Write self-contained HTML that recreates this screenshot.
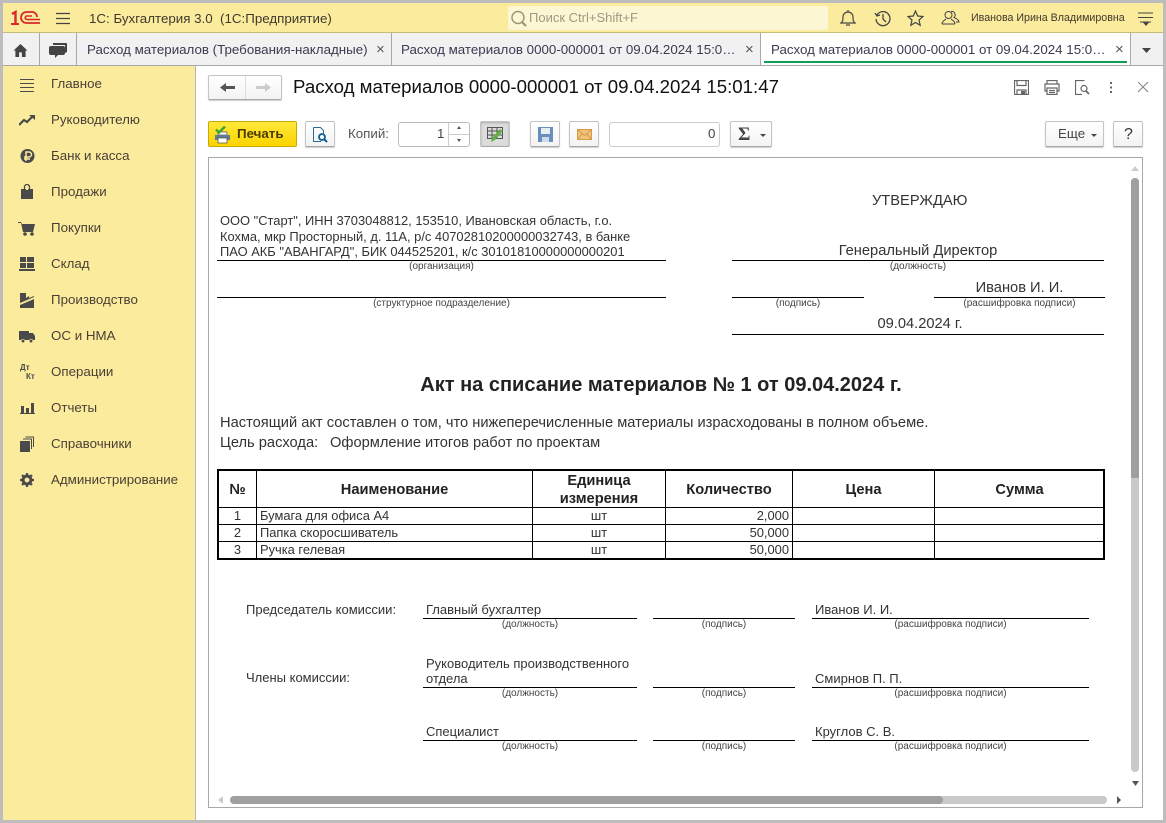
<!DOCTYPE html>
<html lang="ru"><head><meta charset="utf-8"><title>Расход материалов</title>
<style>
html,body{margin:0;padding:0;background:#fff}
body{width:1166px;height:823px;position:relative;overflow:hidden;font-family:"Liberation Sans",Arial,sans-serif;color:#333}
.a{position:absolute}
.t{position:absolute;white-space:nowrap;line-height:16px;height:16px}
.m{font-size:13.33px;color:#4a3f35;left:51px}
.i{position:absolute;left:19px;width:16px;height:16px}
.tab{font-size:13.33px;color:#3b3b50;top:42px}
.x{font-size:15px;color:#555}
.btn{position:absolute;box-sizing:border-box;border:1px solid #c4c4c4;border-bottom-color:#a8a8a8;border-radius:2px;background:linear-gradient(#fff,#f3f3f3);box-shadow:0 1px 1px #ccc}
.d{font-size:14.67px;color:#333}
.s{font-size:10px;color:#444;text-align:center;line-height:10px;height:10px}
.l{position:absolute;background:#000;height:1px}
.sg{font-size:13px;color:#333}
.c{position:absolute;background:#000}
.h{font-size:14.67px;font-weight:bold;color:#222;text-align:center}
.r{font-size:12.9px;color:#333}
</style></head><body>
<!-- frame -->
<div class="a" style="left:0;top:0;width:1166px;height:823px;background:#bdbdbd"></div>
<div class="a" style="left:3px;top:3px;width:1160px;height:817px;background:#fff"></div>
<!-- header -->
<div class="a" style="left:3px;top:3px;width:1160px;height:30px;background:#fbec9d;border-bottom:1px solid #c8bb78;box-sizing:border-box"></div>
<svg class="a" style="left:10px;top:10px" width="32" height="16" viewBox="0 0 32 16"><g fill="none" stroke="#d9272e"><path d="M2 4l3.500-2v12" stroke-width="2.400"/><path d="M1 14h8" stroke-width="2"/><path d="M27 7A5 5 0 0 0 22 2H16.500a5.500 5.500 0 0 0 0 11H30" stroke-width="1.800"/><path d="M22 6H17a1.700 1.700 0 0 0 0 3.500H30" stroke-width="1.600"/></g></svg>
<svg class="a" style="left:56px;top:12px" width="15" height="13"><path d="M0 1.500h14M0 6.500h14M0 11.500h14" stroke="#444" stroke-width="1.200"/></svg>
<div class="t" style="left:89px;top:11px;font-size:13.33px;color:#40382c">1С: Бухгалтерия 3.0&nbsp; (1С:Предприятие)</div>
<div class="a" style="left:508px;top:6px;width:320px;height:24px;background:#fdf6d2;border-radius:2px"></div>
<svg class="a" style="left:510px;top:10px" width="18" height="18" fill="none" stroke="#99937a" stroke-width="1.400"><circle cx="8" cy="7.500" r="6"/><path d="M12 12l4 4" stroke-width="2"/></svg>
<div class="t" style="left:529px;top:10px;font-size:13px;color:#9d9a84">Поиск Ctrl+Shift+F</div>
<svg class="a" style="left:840px;top:10px" width="16" height="17" fill="none" stroke="#444" stroke-width="1.200"><path d="M1 13c2-2 2-3 2-6a5 5 0 0 1 10 0c0 3 0 4 2 6zM8 2V0M6 15h4"/></svg>
<svg class="a" style="left:874px;top:10px" width="18" height="17" fill="none" stroke="#444" stroke-width="1.300"><path d="M3 5a7 7 0 1 1-1 4M1 3l2 3 3-1M9 4v5l3 3"/></svg>
<svg class="a" style="left:907px;top:10px" width="17" height="17" fill="none" stroke="#444" stroke-width="1.200"><path d="M8.500 1l2.200 5 5.300.5-4 3.500 1.200 5.300-4.700-2.800-4.700 2.800 1.200-5.300-4-3.500 5.300-.5z"/></svg>
<svg class="a" style="left:941px;top:9px" width="19" height="17" fill="none" stroke="#444" stroke-width="1"><circle cx="7.500" cy="6" r="3.500"/><path d="M1 15c0-3 3-4 4-5M14 15c0-3-3-4-4-5M1 15h13M10 2.500a3.500 3.500 0 0 1 3 6c2 1 5 2 5 4.500h-3"/></svg>
<div class="t" style="left:971px;top:10px;font-size:10.67px;color:#40382c">Иванова Ирина Владимировна</div>
<svg class="a" style="left:1138px;top:12px" width="16" height="15"><path d="M0 1h15M0 5.500h15M2 10h11" stroke="#444" fill="none"/><path d="M5 10.500h6l-3 3.500z" fill="#444"/></svg>
<!-- tabs -->
<div class="a" style="left:3px;top:33px;width:1160px;height:33px;background:#f1f1f1;border-bottom:1px solid #a8a8a8;box-sizing:border-box"></div>
<div class="a" style="left:39px;top:33px;width:1px;height:32px;background:#a8a8a8"></div>
<div class="a" style="left:76px;top:33px;width:1px;height:32px;background:#a8a8a8"></div>
<div class="a" style="left:391px;top:33px;width:1px;height:32px;background:#a8a8a8"></div>
<div class="a" style="left:760px;top:33px;width:1px;height:32px;background:#a8a8a8"></div>
<div class="a" style="left:761px;top:33px;width:370px;height:32px;background:#fff"></div>
<div class="a" style="left:1130px;top:33px;width:1px;height:32px;background:#a8a8a8"></div>
<div class="a" style="left:764px;top:61px;width:363px;height:2px;background:#0f9d58"></div>
<svg class="a" style="left:13px;top:44px" width="15" height="13" viewBox="0 0 15 14"><path d="M7.500 0L15 7h-2v7H9V9H6v5H2V7H0z" fill="#444"/></svg>
<svg class="a" style="left:49px;top:43px" width="18" height="16"><path d="M4 0h13a1 1 0 0 1 1 1v8l-2 1V2H4z" fill="#444"/><path d="M2 3h12a2 2 0 0 1 2 2v5a2 2 0 0 1-2 2H9l-3 3v-3H2a2 2 0 0 1-2-2V5a2 2 0 0 1 2-2z" fill="#444"/></svg>
<div class="t tab" style="left:87px">Расход материалов (Требования-накладные)</div>
<div class="t x" style="left:376px;top:42px">×</div>
<div class="t tab" style="left:401px">Расход материалов 0000-000001 от 09.04.2024 15:0…</div>
<div class="t x" style="left:745px;top:42px">×</div>
<div class="t tab" style="left:771px">Расход материалов 0000-000001 от 09.04.2024 15:0…</div>
<div class="t x" style="left:1115px;top:42px">×</div>
<svg class="a" style="left:1142px;top:48px" width="9" height="5"><path d="M0 0h9L4.500 5z" fill="#444"/></svg>
<!-- sidebar -->
<div class="a" style="left:3px;top:66px;width:192px;height:754px;background:#fbec9d;border-right:1px solid #b5b5b5"></div>
<svg class="i" style="top:77px"><path d="M1 2.500h14M1 6.500h14M1 10.500h14M1 14.500h14" stroke="#4a4a4a"/></svg>
<div class="t m" style="top:76px">Главное</div>
<svg class="i" style="top:112px"><path d="M0 13l5-5 3 2 5-5" stroke="#4a4a4a" stroke-width="2.200" fill="none"/><path d="M10 3h6v5z" fill="#4a4a4a"/></svg>
<div class="t m" style="top:112px">Руководителю</div>
<svg class="i" style="top:148px;left:20px" width="15" height="15"><circle cx="7.500" cy="8" r="7" fill="#4a4a4a"/><path d="M6 13V4h3a2 2 0 0 1 0 5H4M4 11h6" stroke="#fbec9d" stroke-width="1.500" fill="none"/></svg>
<div class="t m" style="top:148px">Банк и касса</div>
<svg class="i" style="top:184px"><path d="M2 5h12v10H2z" fill="#4a4a4a"/><path d="M5.500 7V3a2.500 2.500 0 0 1 5 0v4" fill="none" stroke="#4a4a4a" stroke-width="1.300"/><path d="M7 5h2v1H7z" fill="#fbec9d"/></svg>
<div class="t m" style="top:184px">Продажи</div>
<svg class="i" style="top:221px;left:18px;width:18px"><path d="M0 1h3l1 2h13l-2 8H5L3 2H0z" fill="#4a4a4a"/><circle cx="7" cy="13" r="1.800" fill="#4a4a4a"/><circle cx="14" cy="13" r="1.800" fill="#4a4a4a"/></svg>
<div class="t m" style="top:220px">Покупки</div>
<svg class="i" style="top:256px;left:19px"><path d="M1 1h6v5H1zM8 1h7v5H8zM1 7h6v5H1zM8 7h7v5H8zM0 13h16v2H0z" fill="#4a4a4a"/></svg>
<div class="t m" style="top:256px">Склад</div>
<svg class="i" style="top:293px"><path d="M1 0h6v5l3-2v2l5-2v1L1 10z" fill="#4a4a4a"/><path d="M1 12L15 6v9H1z" fill="#4a4a4a"/></svg>
<div class="t m" style="top:292px">Производство</div>
<svg class="i" style="top:328px;left:18px;width:18px"><path d="M1 3h10v9H1zM11 5h4l2 3v4h-6z" fill="#4a4a4a"/><circle cx="5" cy="13" r="1.800" fill="#4a4a4a" stroke="#fbec9d" stroke-width=".7"/><circle cx="13" cy="13" r="1.800" fill="#4a4a4a" stroke="#fbec9d" stroke-width=".7"/></svg>
<div class="t m" style="top:328px">ОС и НМА</div>
<div class="t" style="left:20px;top:364px;font-size:8px;font-weight:bold;color:#4a4a4a;line-height:8px;height:8px">Дт</div>
<div class="t" style="left:26px;top:373px;font-size:8px;font-weight:bold;color:#4a4a4a;line-height:8px;height:8px">Кт</div>
<div class="t m" style="top:364px">Операции</div>
<svg class="i" style="top:400px"><path d="M2 6h3v7H2zM7 8h3v5H7zM12 3h3v10h-3zM1 13h15v1H1z" fill="#4a4a4a"/></svg>
<div class="t m" style="top:400px">Отчеты</div>
<svg class="i" style="top:436px"><path d="M1 5h10v11H1z" fill="#4a4a4a"/><path d="M4 3h8.500v10M6.500 1h8v10" stroke="#4a4a4a" fill="none"/></svg>
<div class="t m" style="top:436px">Справочники</div>
<svg class="i" style="top:472px"><circle cx="8" cy="8" r="4" fill="none" stroke="#4a4a4a" stroke-width="3"/><path d="M8 1v14M1 8h14M3 3l10 10M13 3L3 13" stroke="#4a4a4a" stroke-width="2.200"/><circle cx="8" cy="8" r="2.400" fill="#fbec9d"/></svg>
<div class="t m" style="top:472px">Администрирование</div>
<!-- form header -->
<div class="btn" style="left:208px;top:75px;width:74px;height:25px"></div>
<div class="a" style="left:245px;top:76px;width:1px;height:23px;background:#ddd"></div>
<svg class="a" style="left:220px;top:82px" width="15" height="11"><path d="M0 5.500L6 1v3h9v3H6v3z" fill="#555"/></svg>
<svg class="a" style="left:256px;top:82px" width="15" height="11"><path d="M15 5.500L9 1v3H0v3h9v3z" fill="#ccc"/></svg>
<div class="t" style="left:293px;top:76px;font-size:18.67px;line-height:22px;height:22px;color:#111">Расход материалов 0000-000001 от 09.04.2024 15:01:47</div>
<svg class="a" style="left:1014px;top:80px" width="15" height="15" fill="none" stroke="#666" stroke-width="1.200"><path d="M.5.500h14v14H.5zM3 .5v5h9v-5M3 14.500V10h9v4.500"/><path d="M7 11h4v3H7z" fill="#666" stroke="none"/></svg>
<svg class="a" style="left:1044px;top:80px" width="16" height="15" fill="none" stroke="#666" stroke-width="1.200"><path d="M3 4V.5h10V4M3 11H1V4h14v7h-2M3 8h10v6.500H3zM5 10.500h6M5 12.500h6"/></svg>
<svg class="a" style="left:1075px;top:80px" width="15" height="15" fill="none" stroke="#666" stroke-width="1.200"><path d="M7 14.500H.5V.5h9"/><circle cx="9" cy="8.500" r="3"/><path d="M11 11l3 3" stroke-width="1.800"/></svg>
<svg class="a" style="left:1109px;top:81px" width="5" height="13"><path d="M1 1h2v2H1zM1 5.500h2v2H1zM1 10h2v2H1z" fill="#666"/></svg>
<svg class="a" style="left:1137px;top:81px" width="12" height="12"><path d="M1 1l10 10M11 1L1 11" stroke="#888" stroke-width="1.100"/></svg>
<!-- toolbar -->
<div class="a" style="left:208px;top:121px;width:89px;height:26px;box-sizing:border-box;background:linear-gradient(#ffe93a,#fbd400);border:1px solid #c9a800;border-radius:2px"></div>
<svg class="a" style="left:214px;top:126px" width="18" height="18"><path d="M4 6h9v3H4z" fill="#fff" stroke="#555" stroke-width=".7"/><path d="M1 9h15v5H1z" fill="#5f7d92"/><path d="M4 12h9v5H4z" fill="#fff" stroke="#555" stroke-width=".8"/><path d="M2 3.500l3 3 6-6" stroke="#3ca33c" stroke-width="2.400" fill="none"/></svg>
<div class="t" style="left:237px;top:126px;font-size:13.33px;font-weight:bold;color:#4a3b00">Печать</div>
<div class="btn" style="left:305px;top:121px;width:30px;height:26px"></div>
<svg class="a" style="left:313px;top:127px" width="17" height="17"><path d="M.5.500h7l3 3v3M8 14.500H.5V.5" stroke="#2a6a9a" fill="none"/><circle cx="9" cy="10" r="3" stroke="#0f5d94" stroke-width="1.800" fill="none"/><path d="M11 12l3 3" stroke="#0f5d94" stroke-width="2"/></svg>
<div class="t" style="left:348px;top:126px;font-size:13.33px;color:#555">Копий:</div>
<div class="a" style="left:398px;top:122px;width:72px;height:25px;box-sizing:border-box;border:1px solid #bbb;border-radius:3px;background:#fff"></div>
<div class="a" style="left:448px;top:123px;width:1px;height:23px;background:#ccc"></div>
<div class="a" style="left:449px;top:134px;width:20px;height:1px;background:#ccc"></div>
<div class="t" style="left:437px;top:126px;font-size:13.33px;color:#444">1</div>
<svg class="a" style="left:456px;top:126px" width="6" height="18"><path d="M1 3h4L3 0zM1 13h4l-2 3z" fill="#555"/></svg>
<div class="btn" style="left:480px;top:121px;width:30px;height:26px;background:#dcdcdc;box-shadow:inset 0 1px 2px #aaa"></div>
<svg class="a" style="left:487px;top:125px" width="18" height="18"><path d="M.5 2.500h15v11H.5zM.5 6h15M.5 10h15M5 2.500v11M10 2.500v11" stroke="#555" fill="none"/><path d="M4 17l1-4 8-9 3 2-8 9z" fill="#62ad47"/></svg>
<div class="btn" style="left:530px;top:121px;width:30px;height:26px"></div>
<svg class="a" style="left:538px;top:127px" width="15" height="15"><path d="M0 0h15v15H0z" fill="#6b8fbc"/><path d="M3 1h9v6H3z" fill="#e8eef5"/><path d="M4 10h7v5H4z" fill="#cfdbe9"/></svg>
<div class="btn" style="left:569px;top:121px;width:30px;height:26px"></div>
<svg class="a" style="left:577px;top:129px" width="15" height="11"><path d="M.5.500h14v10H.5z" fill="#f1c27a" stroke="#d69a46"/><path d="M.5.500l7 6 7-6M.5 10.500l5-6M14.500 10.500l-5-6" stroke="#d69a46" fill="none"/></svg>
<div class="a" style="left:609px;top:122px;width:111px;height:25px;box-sizing:border-box;border:1px solid #ccc;border-radius:3px;background:#fff"></div>
<div class="t" style="left:708px;top:126px;font-size:13.33px;color:#444">0</div>
<div class="btn" style="left:730px;top:121px;width:42px;height:26px"></div>
<div class="t" style="left:738px;top:125px;font-size:19px;line-height:19px;height:19px;font-family:'Liberation Serif',serif;font-weight:bold;color:#444">Σ</div>
<svg class="a" style="left:760px;top:134px" width="6" height="4"><path d="M0 0h6L3 3z" fill="#444"/></svg>
<div class="btn" style="left:1045px;top:121px;width:59px;height:26px"></div>
<div class="t" style="left:1058px;top:126px;font-size:13.33px;color:#444">Еще</div>
<svg class="a" style="left:1091px;top:134px" width="6" height="4"><path d="M0 0h6L3 3z" fill="#444"/></svg>
<div class="btn" style="left:1113px;top:121px;width:30px;height:26px"></div>
<div class="t" style="left:1124px;top:127px;font-size:16px;color:#333">?</div>
<!-- doc frame -->
<div class="a" style="left:208px;top:157px;width:935px;height:651px;box-sizing:border-box;border:1px solid #a8a8a8;background:#fff"></div>
<!-- doc top left -->
<div class="t r" style="left:220px;top:213px">ООО "Старт", ИНН 3703048812, 153510, Ивановская область, г.о.</div>
<div class="t r" style="left:220px;top:229px">Кохма, мкр Просторный, д. 11А, р/с 40702810200000032743, в банке</div>
<div class="t r" style="left:220px;top:244px">ПАО АКБ "АВАНГАРД", БИК 044525201, к/с 30101810000000000201</div>
<div class="l" style="left:217px;top:260px;width:449px"></div>
<div class="t s" style="left:217px;top:262px;width:449px">(организация)</div>
<div class="l" style="left:217px;top:297px;width:449px"></div>
<div class="t s" style="left:217px;top:299px;width:449px">(структурное подразделение)</div>
<!-- doc top right -->
<div class="t d" style="left:872px;top:193px">УТВЕРЖДАЮ</div>
<div class="t d" style="left:732px;top:243px;width:372px;text-align:center">Генеральный Директор</div>
<div class="l" style="left:732px;top:260px;width:372px"></div>
<div class="t s" style="left:732px;top:262px;width:372px">(должность)</div>
<div class="t d" style="left:934px;top:280px;width:171px;text-align:center">Иванов И. И.</div>
<div class="l" style="left:732px;top:297px;width:132px"></div>
<div class="l" style="left:934px;top:297px;width:171px"></div>
<div class="t s" style="left:732px;top:299px;width:132px">(подпись)</div>
<div class="t s" style="left:934px;top:299px;width:171px">(расшифровка подписи)</div>
<div class="t d" style="left:732px;top:316px;width:376px;text-align:center">09.04.2024 г.</div>
<div class="l" style="left:732px;top:334px;width:372px"></div>
<!-- title -->
<div class="t" style="left:217px;top:374px;width:888px;height:22px;line-height:22px;text-align:center;font-size:20px;font-weight:bold;color:#222">Акт на списание материалов № 1 от 09.04.2024 г.</div>
<div class="t d" style="left:220px;top:415px">Настоящий акт составлен о том, что нижеперечисленные материалы израсходованы в полном объеме.</div>
<div class="t d" style="left:220px;top:435px">Цель расхода:</div>
<div class="t d" style="left:330px;top:435px">Оформление итогов работ по проектам</div>
<!-- table -->
<div class="a" style="left:217px;top:469px;width:888px;height:91px;box-sizing:border-box;border:2px solid #000"></div>
<div class="c" style="left:256px;top:470px;width:1px;height:89px"></div>
<div class="c" style="left:532px;top:470px;width:1px;height:89px"></div>
<div class="c" style="left:665px;top:470px;width:1px;height:89px"></div>
<div class="c" style="left:792px;top:470px;width:1px;height:89px"></div>
<div class="c" style="left:934px;top:470px;width:1px;height:89px"></div>
<div class="c" style="left:218px;top:507px;width:886px;height:1px"></div>
<div class="c" style="left:218px;top:524px;width:886px;height:1px"></div>
<div class="c" style="left:218px;top:541px;width:886px;height:1px"></div>
<div class="t h" style="left:219px;top:482px;width:37px">№</div>
<div class="t h" style="left:257px;top:482px;width:275px">Наименование</div>
<div class="t h" style="left:533px;top:473px;width:132px">Единица</div>
<div class="t h" style="left:533px;top:491px;width:132px">измерения</div>
<div class="t h" style="left:666px;top:482px;width:126px">Количество</div>
<div class="t h" style="left:793px;top:482px;width:141px">Цена</div>
<div class="t h" style="left:935px;top:482px;width:169px">Сумма</div>
<div class="t r" style="left:219px;top:508px;width:37px;text-align:center">1</div>
<div class="t r" style="left:260px;top:508px">Бумага для офиса А4</div>
<div class="t r" style="left:533px;top:508px;width:132px;text-align:center">шт</div>
<div class="t r" style="left:666px;top:508px;width:123px;text-align:right">2,000</div>
<div class="t r" style="left:219px;top:525px;width:37px;text-align:center">2</div>
<div class="t r" style="left:260px;top:525px">Папка скоросшиватель</div>
<div class="t r" style="left:533px;top:525px;width:132px;text-align:center">шт</div>
<div class="t r" style="left:666px;top:525px;width:123px;text-align:right">50,000</div>
<div class="t r" style="left:219px;top:542px;width:37px;text-align:center">3</div>
<div class="t r" style="left:260px;top:542px">Ручка гелевая</div>
<div class="t r" style="left:533px;top:542px;width:132px;text-align:center">шт</div>
<div class="t r" style="left:666px;top:542px;width:123px;text-align:right">50,000</div>
<!-- signatures -->
<div class="t sg" style="left:246px;top:602px">Председатель комиссии:</div>
<div class="t sg" style="left:426px;top:602px">Главный бухгалтер</div>
<div class="t sg" style="left:815px;top:602px">Иванов И. И.</div>
<div class="l" style="left:423px;top:618px;width:214px"></div>
<div class="l" style="left:653px;top:618px;width:142px"></div>
<div class="l" style="left:812px;top:618px;width:277px"></div>
<div class="t s" style="left:423px;top:620px;width:214px">(должность)</div>
<div class="t s" style="left:653px;top:620px;width:142px">(подпись)</div>
<div class="t s" style="left:812px;top:620px;width:277px">(расшифровка подписи)</div>
<div class="t sg" style="left:246px;top:670px">Члены комиссии:</div>
<div class="t sg" style="left:426px;top:656px">Руководитель производственного</div>
<div class="t sg" style="left:426px;top:671px">отдела</div>
<div class="t sg" style="left:815px;top:671px">Смирнов П. П.</div>
<div class="l" style="left:423px;top:687px;width:214px"></div>
<div class="l" style="left:653px;top:687px;width:142px"></div>
<div class="l" style="left:812px;top:687px;width:277px"></div>
<div class="t s" style="left:423px;top:689px;width:214px">(должность)</div>
<div class="t s" style="left:653px;top:689px;width:142px">(подпись)</div>
<div class="t s" style="left:812px;top:689px;width:277px">(расшифровка подписи)</div>
<div class="t sg" style="left:426px;top:724px">Специалист</div>
<div class="t sg" style="left:815px;top:724px">Круглов С. В.</div>
<div class="l" style="left:423px;top:740px;width:214px"></div>
<div class="l" style="left:653px;top:740px;width:142px"></div>
<div class="l" style="left:812px;top:740px;width:277px"></div>
<div class="t s" style="left:423px;top:742px;width:214px">(должность)</div>
<div class="t s" style="left:653px;top:742px;width:142px">(подпись)</div>
<div class="t s" style="left:812px;top:742px;width:277px">(расшифровка подписи)</div>
<!-- scrollbars -->
<svg class="a" style="left:1131px;top:166px" width="8" height="6"><path d="M0 5h8L4 0z" fill="#ccc"/></svg>
<div class="a" style="left:1131px;top:178px;width:8px;height:594px;border-radius:4px;background:#c9c9c9"></div>
<div class="a" style="left:1131px;top:178px;width:8px;height:300px;border-radius:4px 4px 0 0;background:#a0a0a0"></div>
<svg class="a" style="left:1132px;top:781px" width="7" height="5"><path d="M0 0h7L3.500 5z" fill="#555"/></svg>
<svg class="a" style="left:218px;top:796px" width="6" height="8"><path d="M5 0v8L0 4z" fill="#ccc"/></svg>
<div class="a" style="left:230px;top:796px;width:877px;height:8px;border-radius:4px;background:#c9c9c9"></div>
<div class="a" style="left:230px;top:796px;width:713px;height:8px;border-radius:4px;background:#a0a0a0"></div>
<svg class="a" style="left:1116px;top:796px" width="6" height="8"><path d="M1 0v8l4-4z" fill="#555"/></svg>
</body></html>
